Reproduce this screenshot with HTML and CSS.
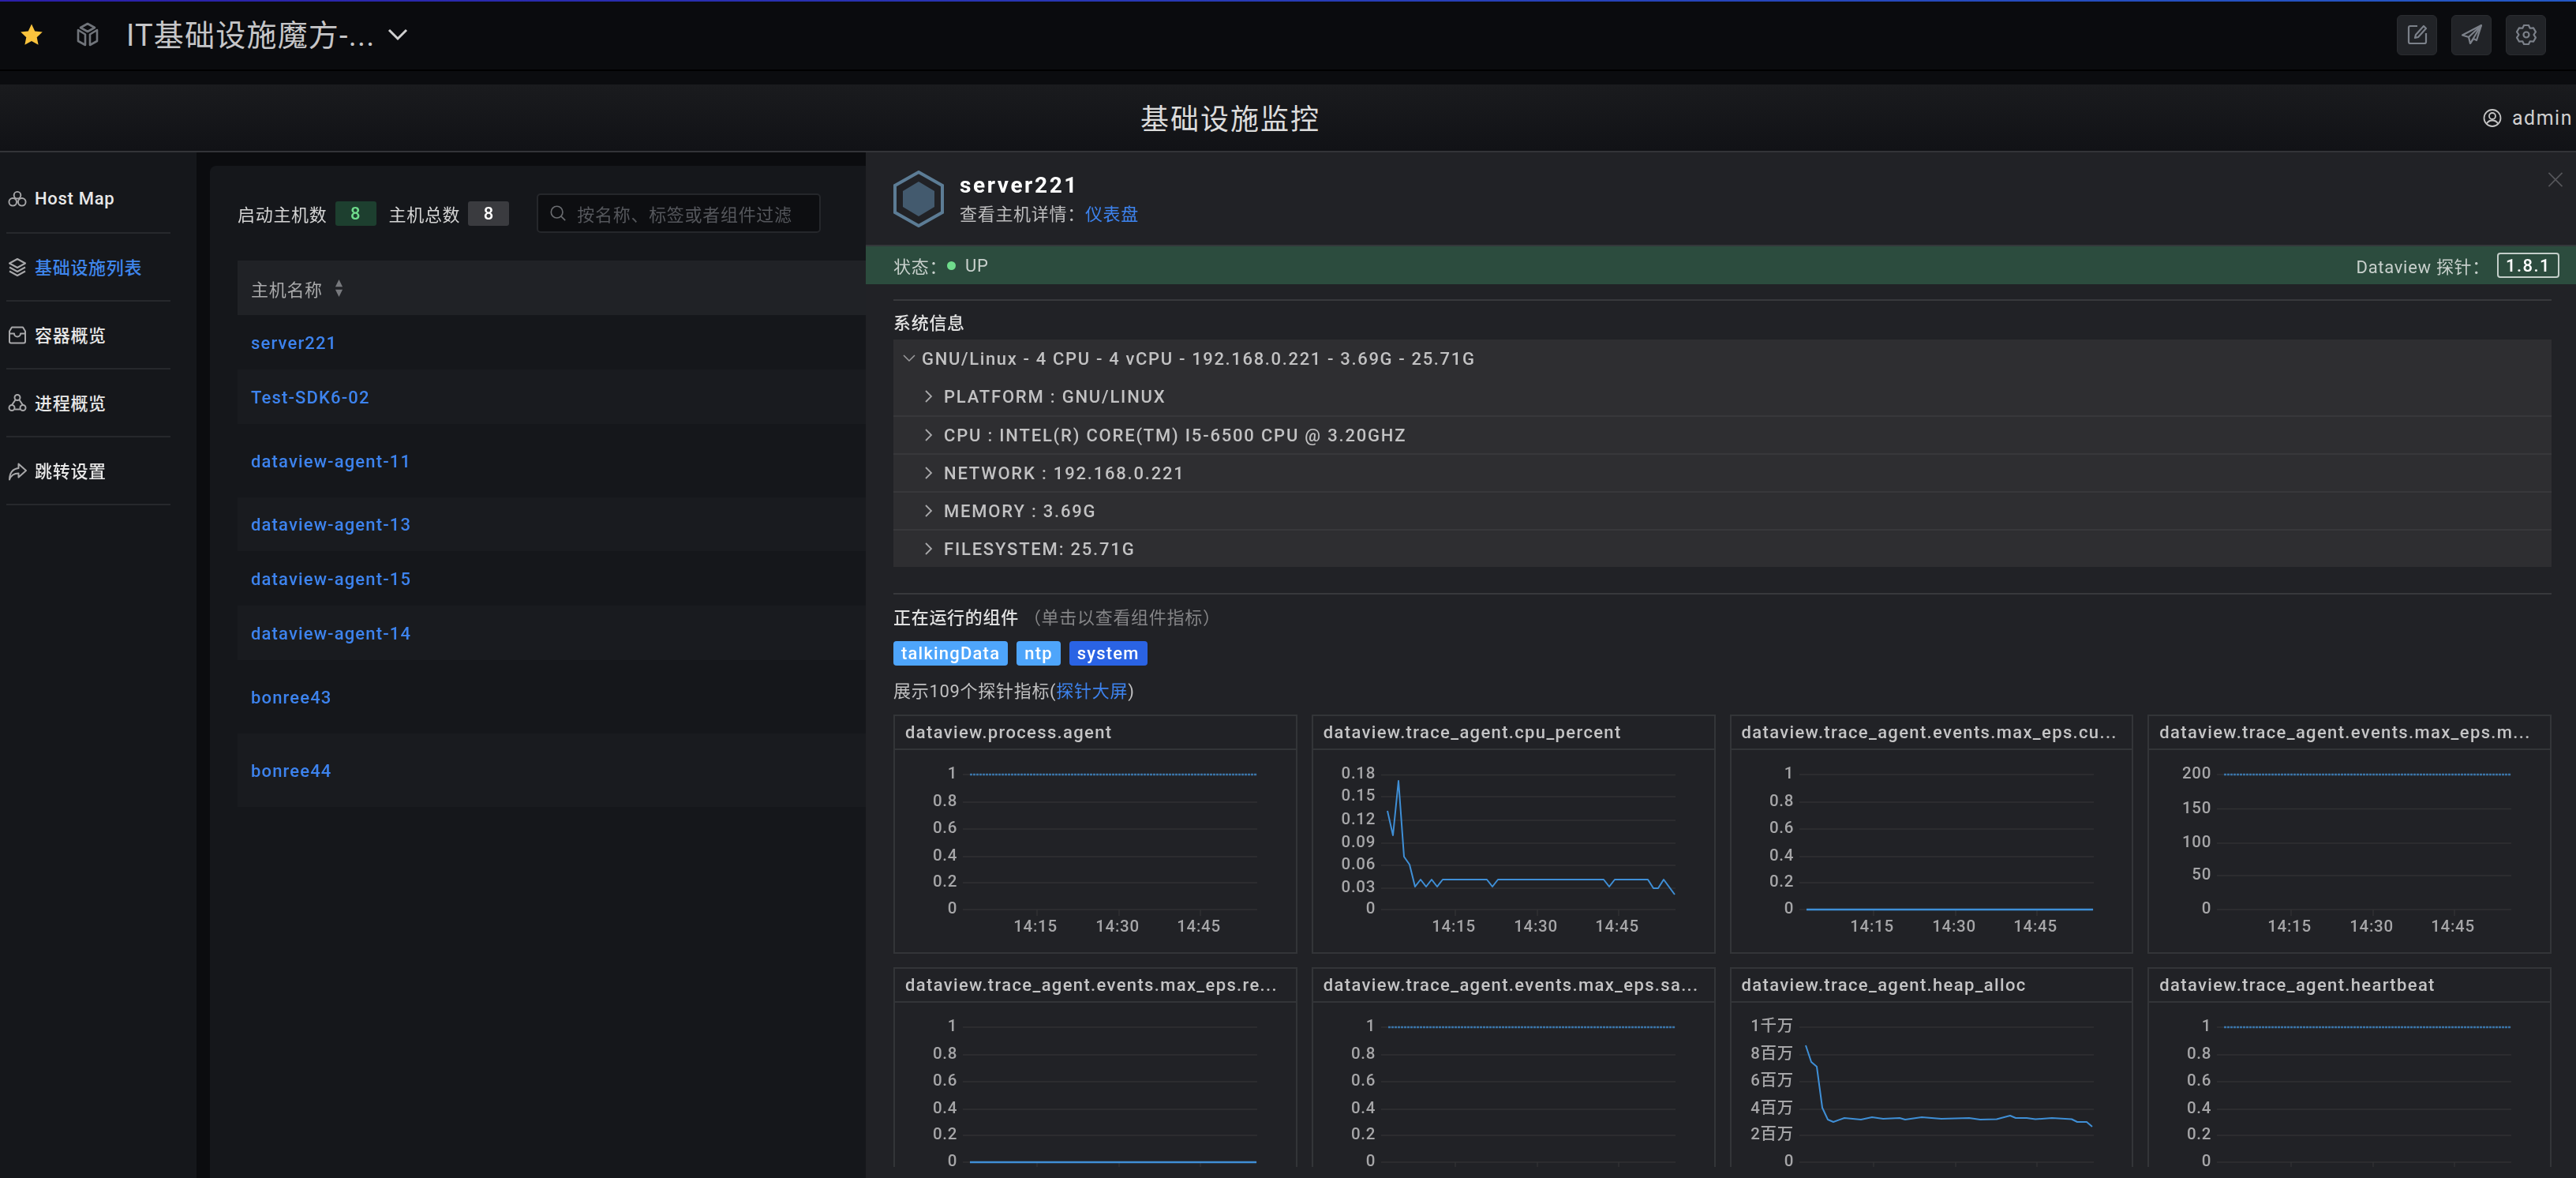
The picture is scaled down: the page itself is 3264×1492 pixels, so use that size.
FILE: index.html
```html
<!DOCTYPE html>
<html lang="zh-CN">
<head>
<meta charset="utf-8">
<title>基础设施监控</title>
<link rel="stylesheet" href="styles.css">
</head>
<body>
<header class="topbar">
  <div class="crumbs">
    <svg class="star" viewBox="0 0 30 30"><path d="M15 1.500l4.200 8.900 9.600 1.200-7.100 6.600 1.900 9.600-8.600-4.800-8.600 4.800 1.900-9.600L1.200 11.600l9.600-1.200z"/></svg>
    <svg class="cube" viewBox="0 0 30 32"><path d="M15 2l9 5-9 5-9-5z"/><path d="M3 10l9 5.500V29l-9-5z"/><path d="M27 10l-9 5.500V29l9-5z"/></svg>
    <span class="dash-name">IT基础设施魔方-...</span>
    <svg class="caret" viewBox="0 0 26 16"><path d="M2 2l11 11L24 2"/></svg>
  </div>
  <div class="top-actions">
    <button class="icon-btn"><svg viewBox="0 0 26 26"><path d="M13 2H4a2 2 0 0 0-2 2v18a2 2 0 0 0 2 2h18a2 2 0 0 0 2-2V11"/><path d="M21 2l3 3-10 11-4 1 1-4z"/></svg></button>
    <button class="icon-btn"><svg viewBox="0 0 26 26"><path d="M25 1L1 13.500 9 16l2 8 4-6 4 2z"/><path d="M25 1L9 16M25 1L11 24"/></svg></button>
    <button class="icon-btn"><svg viewBox="0 0 26 26"><path d="M17.750 4.770L15.810.820h-5.620L8.250 4.770l-4.390-.3-2.810 4.880L3.500 13l-2.450 3.650 2.810 4.880 4.390-.3 1.940 3.950h5.620l1.940-3.950 4.390.3 2.810-4.880L22.500 13l2.450-3.650-2.810-4.880z"/><circle cx="13" cy="13" r="3.500"/></svg></button>
  </div>
</header>

<div class="page-head">
  <h1 class="page-title">基础设施监控</h1>
  <div class="user">
    <svg viewBox="0 0 24 24"><circle cx="12" cy="12" r="10.500"/><circle cx="12" cy="9.500" r="4"/><path d="M5 19c1.500-3 4-4 7-4s5.500 1 7 4"/></svg>
    <span>admin</span>
  </div>
</div>

<main class="main">
  <nav class="sidenav">
    <a class="nav-item"><svg viewBox="0 0 25 24"><circle cx="12.500" cy="6.500" r="4.500"/><circle cx="6.500" cy="15.500" r="5"/><circle cx="18.500" cy="15.500" r="5"/></svg><span>Host Map</span></a>
    <a class="nav-item active"><svg viewBox="0 0 24 24"><path d="M12 1.500l10 5.500-10 5.500L2 7z"/><path d="M2 12l10 5.500L22 12M2 17l10 5.500L22 17"/></svg><span>基础设施列表</span></a>
    <a class="nav-item"><svg viewBox="0 0 24 24"><path d="M5 2h14l3 5v13a2 2 0 0 1-2 2H4a2 2 0 0 1-2-2V7z"/><path d="M2 10h6a4 4 0 0 0 8 0h6"/></svg><span>容器概览</span></a>
    <a class="nav-item"><svg viewBox="0 0 24 24"><circle cx="12" cy="5" r="3.500"/><circle cx="5" cy="18" r="3.500"/><circle cx="19" cy="18" r="3.500"/><path d="M9.500 8L5 14.500M14.500 8L19 14.500M8.500 20h7"/></svg><span>进程概览</span></a>
    <a class="nav-item"><svg viewBox="0 0 24 24"><path d="M13.500 3L23 11.500 13.500 20v-5C8 15 4 17 2 23c0-8 4-14 11.500-14.500z"/></svg><span>跳转设置</span></a>
  </nav>

  <section class="content">
    <div class="toolbar">
      <span>启动主机数</span><span class="count up">8</span>
      <span class="total-label">主机总数</span><span class="count">8</span>
      <div class="search">
        <svg viewBox="0 0 24 24"><circle cx="10.500" cy="10.500" r="8"/><path d="M16.500 16.500L22 22"/></svg>
        <span>按名称、标签或者组件过滤</span>
      </div>
    </div>
    <div class="table">
      <div class="thead">
        <span>主机名称</span>
        <svg viewBox="0 0 12 26"><path d="M6 1l5 10H1zM6 25L1 15h10z"/></svg>
      </div>
      <div class="row"><a>server221</a></div>
      <div class="row alt"><a>Test-SDK6-02</a></div>
      <div class="row tall"><a>dataview-agent-11</a></div>
      <div class="row alt"><a>dataview-agent-13</a></div>
      <div class="row"><a>dataview-agent-15</a></div>
      <div class="row alt"><a>dataview-agent-14</a></div>
      <div class="row tall"><a>bonree43</a></div>
      <div class="row tall alt"><a>bonree44</a></div>
    </div>
  </section>

  <aside class="drawer">
    <svg class="close" viewBox="0 0 20 20"><path d="M1 1l18 18M19 1L1 19"/></svg>
    <div class="drawer-head">
      <svg class="hex" viewBox="0 0 64 72"><path class="hex-o" d="M32 2l30 17v34L32 70 2 53V19z"/><path class="hex-i" d="M32 14l20 12v20L32 58 12 46V26z"/></svg>
      <div>
        <div class="host-name">server221</div>
        <div class="host-sub">查看主机详情：<a>仪表盘</a></div>
      </div>
    </div>
    <div class="status">
      <div class="status-left"><span>状态：</span><i class="dot"></i><span>UP</span></div>
      <div class="status-right"><span>Dataview 探针：</span><b class="version">1.8.1</b></div>
    </div>
    <div class="drawer-body">
      <hr class="sep">
      <h3 class="sys-title">系统信息</h3>
      <div class="tree">
        <div class="tree-root"><svg viewBox="0 0 16 10"><path d="M1 1l7 7 7-7"/></svg><span>GNU/Linux - 4 CPU - 4 vCPU - 192.168.0.221 - 3.69G - 25.71G</span></div>
        <div class="tree-row"><svg viewBox="0 0 10 16"><path d="M1 1l7 7-7 7"/></svg><span>PLATFORM : GNU/LINUX</span></div>
        <div class="tree-row"><svg viewBox="0 0 10 16"><path d="M1 1l7 7-7 7"/></svg><span>CPU : INTEL(R) CORE(TM) I5-6500 CPU @ 3.20GHZ</span></div>
        <div class="tree-row"><svg viewBox="0 0 10 16"><path d="M1 1l7 7-7 7"/></svg><span>NETWORK : 192.168.0.221</span></div>
        <div class="tree-row"><svg viewBox="0 0 10 16"><path d="M1 1l7 7-7 7"/></svg><span>MEMORY : 3.69G</span></div>
        <div class="tree-row"><svg viewBox="0 0 10 16"><path d="M1 1l7 7-7 7"/></svg><span>FILESYSTEM: 25.71G</span></div>
      </div>
      <hr class="sep second">
      <div class="comp-title"><b>正在运行的组件</b><span>（单击以查看组件指标）</span></div>
      <div class="tags"><span class="tag light">talkingData</span><span class="tag light">ntp</span><span class="tag strong">system</span></div>
      <div class="metric-count">展示109个探针指标(<a>探针大屏</a>)</div>
      <div class="panels">

        <article class="panel">
          <div class="panel-title">dataview.process.agent</div>
          <svg class="chart" viewBox="0 0 508 256">
            <path class="grid" d="M86 31H459M86 66H459M86 100H459M86 135H459M86 168H459M86 202H459M180 202v8M284 202v8M387 202v8"/>
            <text class="ax" x="79" y="36">1</text><text class="ax" x="79" y="71">0.8</text><text class="ax" x="79" y="105">0.6</text><text class="ax" x="79" y="140">0.4</text><text class="ax" x="79" y="173">0.2</text><text class="ax" x="79" y="207">0</text>
            <text class="ax t" x="178" y="230">14:15</text><text class="ax t" x="282" y="230">14:30</text><text class="ax t" x="385" y="230">14:45</text>
            <path class="flat" d="M95 31H458"/>
          </svg>
        </article>

        <article class="panel">
          <div class="panel-title">dataview.trace_agent.cpu_percent</div>
          <svg class="chart" viewBox="0 0 508 256">
            <path class="grid" d="M86 31.500H459M86 59H459M86 89H459M86 118H459M86 146H459M86 175H459M86 202H459M180 202v8M284 202v8M387 202v8"/>
            <text class="ax" x="79" y="36">0.18</text><text class="ax" x="79" y="64">0.15</text><text class="ax" x="79" y="94">0.12</text><text class="ax" x="79" y="123">0.09</text><text class="ax" x="79" y="151">0.06</text><text class="ax" x="79" y="180">0.03</text><text class="ax" x="79" y="207">0</text>
            <text class="ax t" x="178" y="230">14:15</text><text class="ax t" x="282" y="230">14:30</text><text class="ax t" x="385" y="230">14:45</text>
            <polyline class="series" points="94,77 101,108 108,39 115,135 122,145 129,173 136,164 143,173 150,164 157,173 164,164 220,164 227,173 234,164 368,164 375,173 382,164 424,164 431,175 437,175 444,164 458,183"/>
          </svg>
        </article>

        <article class="panel">
          <div class="panel-title">dataview.trace_agent.events.max_eps.cu...</div>
          <svg class="chart" viewBox="0 0 508 256">
            <path class="grid" d="M86 31H459M86 66H459M86 100H459M86 135H459M86 168H459M86 202H459M180 202v8M284 202v8M387 202v8"/>
            <text class="ax" x="79" y="36">1</text><text class="ax" x="79" y="71">0.8</text><text class="ax" x="79" y="105">0.6</text><text class="ax" x="79" y="140">0.4</text><text class="ax" x="79" y="173">0.2</text><text class="ax" x="79" y="207">0</text>
            <text class="ax t" x="178" y="230">14:15</text><text class="ax t" x="282" y="230">14:30</text><text class="ax t" x="385" y="230">14:45</text>
            <path class="zero" d="M95 202H458"/>
          </svg>
        </article>

        <article class="panel">
          <div class="panel-title">dataview.trace_agent.events.max_eps.m...</div>
          <svg class="chart" viewBox="0 0 508 256">
            <path class="grid" d="M86 31H459M86 74.500H459M86 118H459M86 159H459M86 202H459M180 202v8M284 202v8M387 202v8"/>
            <text class="ax" x="79" y="36">200</text><text class="ax" x="79" y="80">150</text><text class="ax" x="79" y="123">100</text><text class="ax" x="79" y="164">50</text><text class="ax" x="79" y="207">0</text>
            <text class="ax t" x="178" y="230">14:15</text><text class="ax t" x="282" y="230">14:30</text><text class="ax t" x="385" y="230">14:45</text>
            <path class="flat" d="M95 31H458"/>
          </svg>
        </article>

        <article class="panel">
          <div class="panel-title">dataview.trace_agent.events.max_eps.re...</div>
          <svg class="chart" viewBox="0 0 508 256">
            <path class="grid" d="M86 31H459M86 66H459M86 100H459M86 135H459M86 168H459M86 202H459M180 202v8M284 202v8M387 202v8"/>
            <text class="ax" x="79" y="36">1</text><text class="ax" x="79" y="71">0.8</text><text class="ax" x="79" y="105">0.6</text><text class="ax" x="79" y="140">0.4</text><text class="ax" x="79" y="173">0.2</text><text class="ax" x="79" y="207">0</text>
            <path class="zero" d="M95 202H458"/>
          </svg>
        </article>

        <article class="panel">
          <div class="panel-title">dataview.trace_agent.events.max_eps.sa...</div>
          <svg class="chart" viewBox="0 0 508 256">
            <path class="grid" d="M86 31H459M86 66H459M86 100H459M86 135H459M86 168H459M86 202H459M180 202v8M284 202v8M387 202v8"/>
            <text class="ax" x="79" y="36">1</text><text class="ax" x="79" y="71">0.8</text><text class="ax" x="79" y="105">0.6</text><text class="ax" x="79" y="140">0.4</text><text class="ax" x="79" y="173">0.2</text><text class="ax" x="79" y="207">0</text>
            <path class="flat" d="M95 31H458"/>
          </svg>
        </article>

        <article class="panel">
          <div class="panel-title">dataview.trace_agent.heap_alloc</div>
          <svg class="chart" viewBox="0 0 508 256">
            <path class="grid" d="M86 31H459M86 66H459M86 100H459M86 135H459M86 168H459M86 202H459M180 202v8M284 202v8M387 202v8"/>
            <text class="ax" x="79" y="36">1千万</text><text class="ax" x="79" y="71">8百万</text><text class="ax" x="79" y="105">6百万</text><text class="ax" x="79" y="140">4百万</text><text class="ax" x="79" y="173">2百万</text><text class="ax" x="79" y="207">0</text>
            <polyline class="series" points="94,54 101,75 108,81 115,133 122,148 129,151 143,146 164,148 178,145 192,147 213,146 220,148 241,145 266,147 301,146 315,148 336,147.500 353,143 360,146 374,146 385,147.500 406,146 431,147.500 438,151 450,151 457,157"/>
          </svg>
        </article>

        <article class="panel">
          <div class="panel-title">dataview.trace_agent.heartbeat</div>
          <svg class="chart" viewBox="0 0 508 256">
            <path class="grid" d="M86 31H459M86 66H459M86 100H459M86 135H459M86 168H459M86 202H459M180 202v8M284 202v8M387 202v8"/>
            <text class="ax" x="79" y="36">1</text><text class="ax" x="79" y="71">0.8</text><text class="ax" x="79" y="105">0.6</text><text class="ax" x="79" y="140">0.4</text><text class="ax" x="79" y="173">0.2</text><text class="ax" x="79" y="207">0</text>
            <path class="flat" d="M95 31H458"/>
          </svg>
        </article>

      </div>
    </div>
  </aside>
</main>
</body>
</html>
```

FILE: styles.css
```css
* { box-sizing: border-box; }
html, body { margin: 0; height: 100%; }
body {
  width: 3264px;
  height: 1492px;
  overflow: hidden;
  display: flex;
  flex-direction: column;
  background: #0b0c0f;
  color: #c8c8c9;
  font-family: Roboto, "Noto Sans CJK SC", sans-serif;
  font-size: 22px;
  letter-spacing: 0.700px;
  filter: blur(0.6px);
}
a { color: #3d83ee; }
svg { display: block; flex: none; }

/* top bar */
.topbar {
  flex: none;
  height: 90px;
  padding: 0 38px 0 24px;
  display: flex;
  align-items: center;
  justify-content: space-between;
  background: #0a0b0e;
  border-bottom: 2px solid #000;
  position: relative;
}
.topbar::before {
  content: "";
  position: absolute;
  left: 0; right: 0; top: 0;
  height: 2px;
  background: linear-gradient(90deg, #2b1fa8, #2458c4);
}
.crumbs { display: flex; align-items: center; }
.star { width: 32px; height: 30px; fill: #fac33d; }
.cube { width: 30px; height: 32px; margin-left: 40px; fill: none; stroke: #70747a; stroke-width: 2.600; stroke-linejoin: round; }
.dash-name { margin-left: 34px; padding-top: 2px; font-size: 38px; letter-spacing: 1.200px; color: #c6c6c8; line-height: 44px; }
.caret { width: 26px; height: 16px; margin-left: 16px; fill: none; stroke: #d0d0d0; stroke-width: 3; }
.top-actions { display: flex; gap: 18px; }
.icon-btn {
  width: 51px;
  height: 51px;
  padding: 0;
  display: flex;
  align-items: center;
  justify-content: center;
  background: #212327;
  border: 1px solid #2a2c30;
  border-radius: 6px;
}
.icon-btn svg { width: 26px; height: 26px; fill: none; stroke: #7c818a; stroke-width: 2.200; stroke-linejoin: round; }

/* page header */
.page-head {
  flex: none;
  height: 86px;
  margin-top: 17px;
  display: flex;
  align-items: center;
  background: linear-gradient(180deg, #1a1b1e, #111216);
  border-bottom: 2px solid #333438;
}
.page-title {
  flex: 1;
  margin: 0 0 3px;
  padding-left: 4px;
  text-align: center;
  font-size: 36px;
  font-weight: 400;
  letter-spacing: 2px;
  color: #dcdcdc;
}
.user {
  flex: 0 0 150px;
  padding-left: 32px;
  display: flex;
  align-items: center;
  gap: 13px;
  font-size: 25px;
  letter-spacing: 1.500px;
  color: #d0d0d0;
}
.user svg { width: 24px; height: 25px; fill: none; stroke: #c4c4c4; stroke-width: 1.800; }

/* layout */
.main { flex: 1; min-height: 0; display: flex; position: relative; }
.sidenav { flex: 0 0 249px; padding-top: 17px; background: #15171b; }
.nav-item {
  height: 86px;
  margin: 0 33px 0 8px;
  padding-left: 2px;
  display: flex;
  align-items: center;
  gap: 10px;
  border-bottom: 2px solid #26282c;
  color: #e8e8e8;
  font-weight: 500;
}
.nav-item span { padding-bottom: 2px; }
.nav-item svg { width: 24px; height: 25px; fill: none; stroke: #a8a8aa; stroke-width: 2; stroke-linejoin: round; }
.nav-item.active { color: #3f86ec; }

/* list */
.content {
  flex: 1;
  min-width: 0;
  margin: 17px 0 0 17px;
  padding: 35px 0 0 35px;
  background: #15171b;
  border-radius: 8px 0 0 0;
}
.toolbar { display: flex; align-items: center; height: 50px; color: #d4d4d4; }
.count {
  width: 52px;
  height: 31px;
  margin-left: 10px;
  display: flex;
  align-items: center;
  justify-content: center;
  background: #3a3b3f;
  border-radius: 3px;
  color: #fff;
  font-weight: 500;
}
.count.up { background: #1d3f2f; color: #6fdc8c; }
.total-label { margin-left: 16px; }
.search {
  width: 360px;
  height: 50px;
  margin-left: 35px;
  padding-left: 14px;
  display: flex;
  align-items: center;
  gap: 13px;
  background: #0d0e11;
  border: 2px solid #25272b;
  border-radius: 5px;
  color: #55575c;
}
.search svg { width: 22px; height: 24px; fill: none; stroke: #6a6c70; stroke-width: 1.800; }
.table { margin-top: 35px; }
.thead {
  height: 69px;
  padding-left: 17px;
  display: flex;
  align-items: center;
  gap: 15px;
  background: #202226;
  color: #a9aaab;
}
.thead svg { width: 11px; height: 24px; fill: #77797d; }
.row { height: 68.800px; padding: 2px 0 0 17px; display: flex; align-items: center; font-weight: 500; letter-spacing: 1.150px; }
.row.tall { height: 93px; }
.row.alt { background: #191b1f; }

/* drawer */
.drawer {
  position: absolute;
  top: 0; right: 0; bottom: 0;
  width: 2167px;
  display: flex;
  flex-direction: column;
  background: #212226;
}
.close { position: absolute; top: 25px; right: 16px; width: 20px; height: 19px; fill: none; stroke: #55565a; stroke-width: 1.800; }
.drawer-head { flex: none; height: 117px; padding-left: 35px; display: flex; align-items: center; gap: 20px; }
.hex { width: 64px; height: 72px; }
.hex-o { fill: none; stroke: #5c7c95; stroke-width: 4; }
.hex-i { fill: #435a6e; }
.host-name { font-size: 28px; font-weight: 700; letter-spacing: 2.600px; color: #fff; line-height: 36px; }
.host-sub { margin-top: 4px; line-height: 30px; color: #bdbdbe; }
.status {
  flex: none;
  height: 50px;
  padding: 0 21px 0 35px;
  display: flex;
  align-items: center;
  justify-content: space-between;
  background: #2c4c3e;
  border-top: 2px solid #34373a;
  color: #c8d0cc;
}
.status-left, .status-right { display: flex; align-items: center; }
.dot { width: 11px; height: 11px; margin: 0 12px 0 0; border-radius: 50%; background: #6fdc8c; }
.version {
  width: 79px;
  height: 32px;
  margin-left: 9px;
  display: flex;
  align-items: center;
  justify-content: center;
  border: 2px solid #c4cec9;
  border-radius: 4px;
  font-weight: 500;
  letter-spacing: 1.500px;
  color: #fff;
}
.drawer-body {
  flex: 1;
  min-height: 0;
  padding: 0 31px 14px 35px;
  display: flex;
  flex-direction: column;
}
.sep { flex: none; width: 100%; height: 2px; margin: 19px 0 0; border: 0; background: #38393c; }
.sep.second { margin-top: 33px; }
.sys-title { flex: none; height: 49px; margin: 0; padding-top: 12px; line-height: 34px; font-size: 22px; font-weight: 500; color: #e2e2e2; }
.tree { flex: none; background: #2e2e31; color: #c2c2c3; font-weight: 500; letter-spacing: 1.800px; }
.tree-root, .tree-row { height: 48px; display: flex; align-items: center; }
.tree-root { padding-left: 12px; gap: 8px; letter-spacing: 1.650px; }
.tree-root svg { width: 16px; height: 10px; fill: none; stroke: #9d9d9f; stroke-width: 1.500; }
.tree-row { padding-left: 40px; gap: 14px; border-top: 2px solid #38383b; }
.tree-root + .tree-row { border-top: 0; }
.tree-row svg { width: 10px; height: 16px; fill: none; stroke: #a8a8aa; stroke-width: 1.800; }
.comp-title { flex: none; margin-top: 13px; line-height: 34px; }
.comp-title b { font-weight: 500; color: #e0e0e0; }
.comp-title span { margin-left: 6px; color: #858587; }
.tags { flex: none; margin-top: 12px; display: flex; gap: 11px; }
.tag { height: 31px; padding: 0 10px; display: flex; align-items: center; border-radius: 4px; color: #fff; font-weight: 500; letter-spacing: 1.200px; }
.tag.light { background: #4ea5fb; }
.tag.strong { background: #2a63e4; }
.metric-count { flex: none; margin-top: 16px; line-height: 34px; color: #c0c0c1; }

/* panels */
.panels {
  flex: 1 1 0;
  min-height: 0;
  margin-top: 12px;
  overflow: hidden;
  display: grid;
  grid-template-columns: repeat(4, 1fr);
  grid-auto-rows: 303px;
  column-gap: 18px;
  row-gap: 17px;
  align-content: start;
}
.panel { min-width: 0; border: 2px solid #333538; }
.panel-title {
  height: 43px;
  padding: 0 0 0 13px;
  line-height: 41px;
  border-bottom: 2px solid #333538;
  white-space: nowrap;
  color: #c4c4c5;
  font-weight: 500;
  letter-spacing: 1.350px;
}
.chart { width: 508px; height: 256px; }
.grid { fill: none; stroke: #303133; stroke-width: 1.500; }
.ax { font-size: 20.500px; font-weight: 500; letter-spacing: 0.700px; fill: #a6a6a8; text-anchor: end; }
.ax.t { text-anchor: middle; }
.flat { fill: none; stroke: #3a74a8; stroke-width: 2.500; stroke-dasharray: 3 1; }
.zero { fill: none; stroke: #3f8fd6; stroke-width: 2.500; }
.series { fill: none; stroke: #3f8fd6; stroke-width: 2; stroke-linejoin: round; }
```
